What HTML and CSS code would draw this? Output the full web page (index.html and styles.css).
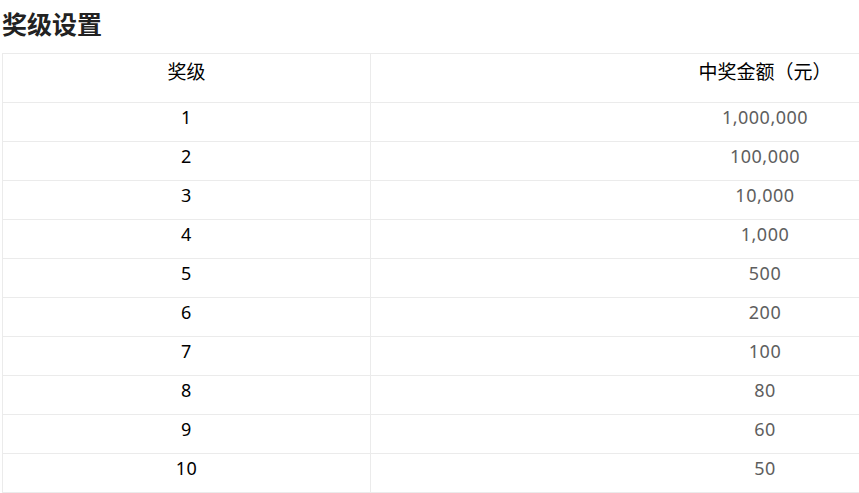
FILE: index.html
```html
<!DOCTYPE html>
<html lang="zh-CN">
<head>
<meta charset="utf-8">
<title>奖级设置</title>
<link rel="stylesheet" href="styles.css">
</head>
<body>
<div class="page">
  <h1 class="title">奖级设置</h1>
  <table class="prize-table">
    <thead>
      <tr>
        <th class="col-level">奖级</th>
        <th class="col-amount">中奖金额（元）</th>
      </tr>
    </thead>
    <tbody>
      <tr><td class="level">1</td><td class="amount">1,000,000</td></tr>
      <tr><td class="level">2</td><td class="amount">100,000</td></tr>
      <tr><td class="level">3</td><td class="amount">10,000</td></tr>
      <tr><td class="level">4</td><td class="amount">1,000</td></tr>
      <tr><td class="level">5</td><td class="amount">500</td></tr>
      <tr><td class="level">6</td><td class="amount">200</td></tr>
      <tr><td class="level">7</td><td class="amount">100</td></tr>
      <tr><td class="level">8</td><td class="amount">80</td></tr>
      <tr><td class="level">9</td><td class="amount">60</td></tr>
      <tr><td class="level">10</td><td class="amount">50</td></tr>
    </tbody>
  </table>
</div>
</body>
</html>
```

FILE: styles.css
```css
html, body {
  margin: 0;
  padding: 0;
  background: #fff;
  overflow: hidden;
}

body {
  font-family: "Noto Sans", "Noto Sans CJK SC", sans-serif;
  color: #000;
}

.page {
  padding: 0 0 0 2px;
  width: 1200px;
}

.title {
  margin: 7px 0 13px 0;
  font-family: "Noto Sans CJK SC", sans-serif;
  font-size: 25px;
  line-height: 33px;
  font-weight: 700;
  color: #222;
}

.prize-table {
  width: 1158px;
  border-collapse: collapse;
  border: 1px solid #ebebeb;
  table-layout: fixed;
}

.prize-table th,
.prize-table td {
  border: 1px solid #ebebeb;
  text-align: center;
  vertical-align: top;
  padding: 0;
  box-sizing: border-box;
}

.prize-table th {
  height: 49px;
  padding-top: 5px;
  font-family: "Noto Sans CJK SC", sans-serif;
  font-weight: 400;
  font-size: 19px;
  line-height: 24px;
  color: #000;
}

.prize-table td {
  height: 39px;
  padding-top: 2px;
  font-size: 18px;
  line-height: 24px;
  letter-spacing: 0.5px;
}

.col-level {
  width: 368px;
}

.level {
  color: #000;
}

.amount {
  color: #5e5e5e;
}
```
